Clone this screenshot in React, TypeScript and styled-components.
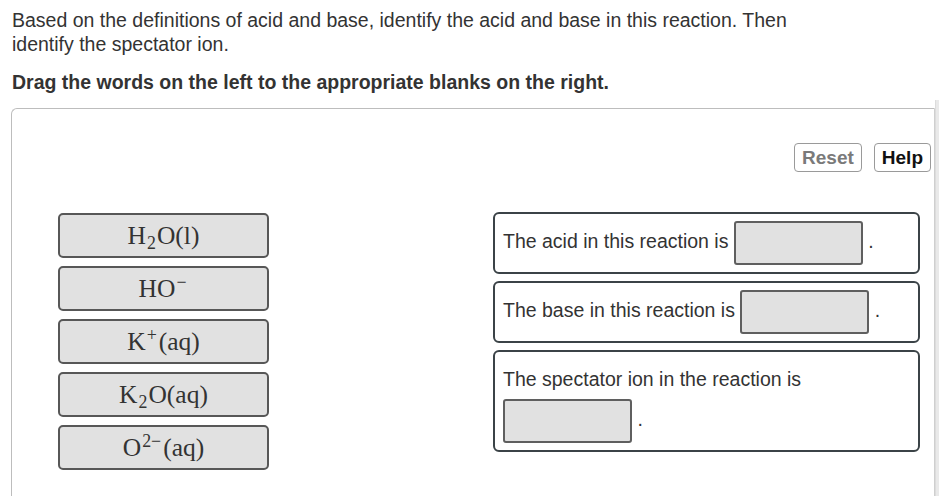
import styled, { createGlobalStyle } from "styled-components";

const GlobalStyle = createGlobalStyle`
  html, body {
    margin: 0;
    padding: 0;
    background: #fff;
  }
  body {
    font-family: "Liberation Sans", Arial, sans-serif;
    color: #333;
    overflow: hidden;
  }
`;

const Page = styled.div`
  display: flex;
  width: 939px;
  height: 496px;
  overflow: hidden;
`;

const Main = styled.div`
  width: 925px;
  padding: 8px 0 0 11px;
`;

const ScrollStrip = styled.div`
  width: 3px;
  margin-top: 100px;
  background: #e9e9e9;
  border-left: 1px solid #dcdcdc;
`;

const Intro = styled.p`
  max-width: 795px;
  margin: 0 0 0 1px;
  font-size: 19.5px;
  line-height: 24px;
`;

const Instruction = styled.p`
  margin: 14px 0 0 1px;
  font-size: 19.5px;
  line-height: 24px;
  font-weight: bold;
`;

const Panel = styled.div`
  margin-top: 14px;
  min-height: 420px;
  border: 1px solid #bdbdbd;
  border-right-color: #cfcfcf;
  border-bottom: none;
  border-top-left-radius: 6px;
  padding: 34px 3px 0 46px;
`;

const Toolbar = styled.div`
  display: flex;
  justify-content: flex-end;
  gap: 12px;
`;

const ToolButton = styled.button<{ $muted?: boolean }>`
  height: 29px;
  padding: 0 7px;
  font-family: "Liberation Sans", Arial, sans-serif;
  font-size: 19px;
  font-weight: bold;
  color: ${({ $muted }) => ($muted ? "#7a7a7a" : "#111")};
  background: #fff;
  border: 1px solid #9a9a9a;
  border-radius: 4px;
  cursor: pointer;
`;

const Workspace = styled.div`
  display: flex;
  align-items: flex-start;
  margin-top: 40px;
`;

const TileColumn = styled.div`
  display: flex;
  flex-direction: column;
  gap: 8px;
  width: 211px;
  margin-top: 1px;
`;

const Tile = styled.div`
  box-sizing: border-box;
  height: 45px;
  display: flex;
  align-items: center;
  justify-content: center;
  background: #e1e1e1;
  border: 2px solid #575757;
  border-radius: 5px;
  cursor: grab;
`;

const Formula = styled.span`
  font-family: "Liberation Serif", "Times New Roman", serif;
  font-size: 25.5px;
  line-height: 30px;
  color: #333;
  white-space: nowrap;
`;

const Sub = styled.sub`
  font-size: 70%;
  vertical-align: -0.3em;
  line-height: 0;
  margin: 0 1px;
`;

const Sup = styled.sup`
  font-size: 70%;
  vertical-align: 0.46em;
  line-height: 0;
  margin: 0 2px 0 1px;
`;

const BoxColumn = styled.div`
  display: flex;
  flex-direction: column;
  gap: 7px;
  width: 427px;
  margin-left: 224px;
`;

const Sentence = styled.div`
  box-sizing: border-box;
  padding: 7px 8px;
  border: 2px solid #3b4347;
  border-radius: 6px;
  font-size: 19.5px;
  line-height: 40px;
  color: #333;
`;

const Blank = styled.span`
  display: inline-block;
  box-sizing: border-box;
  width: 129px;
  height: 44px;
  vertical-align: middle;
  background: #e1e1e1;
  border: 2px solid #5f5f5f;
  border-radius: 3px;
`;

const terms = [
  <>H<Sub>2</Sub>O(l)</>,
  <>HO<Sup>−</Sup></>,
  <>K<Sup>+</Sup>(aq)</>,
  <>K<Sub>2</Sub>O(aq)</>,
  <>O<Sup>2−</Sup>(aq)</>,
];

const sentences = [
  "The acid in this reaction is",
  "The base in this reaction is",
  "The spectator ion in the reaction is",
];

export default function App() {
  return (
    <Page>
      <GlobalStyle />
      <Main>
        <Intro>
          Based on the definitions of acid and base, identify the acid and base in this reaction. Then
          identify the spectator ion.
        </Intro>
        <Instruction>Drag the words on the left to the appropriate blanks on the right.</Instruction>
        <Panel>
          <Toolbar>
            <ToolButton $muted>Reset</ToolButton>
            <ToolButton>Help</ToolButton>
          </Toolbar>
          <Workspace>
            <TileColumn>
              {terms.map((term, i) => (
                <Tile key={i}>
                  <Formula>{term}</Formula>
                </Tile>
              ))}
            </TileColumn>
            <BoxColumn>
              {sentences.map((text) => (
                <Sentence key={text}>
                  {text} <Blank /> .
                </Sentence>
              ))}
            </BoxColumn>
          </Workspace>
        </Panel>
      </Main>
      <ScrollStrip />
    </Page>
  );
}
